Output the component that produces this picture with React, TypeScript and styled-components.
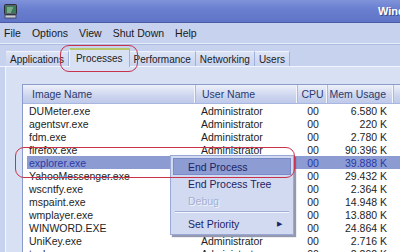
import styled, { createGlobalStyle } from 'styled-components';

const GlobalStyle = createGlobalStyle`
	html, body {
		margin: 0;
		padding: 0;
		background: #c6d2ee;
	}
	body {
		font-family: "Liberation Sans", Arial, sans-serif;
		font-size: 10px;
		color: #1e1e1e;
	}
`;

const Window = styled.div`
	position: relative;
	width: 400px;
	height: 252px;
	overflow: hidden;
	display: flex;
	flex-direction: column;
	background: #c6d2ee;
`;

const TitleBar = styled.div`
	height: 23px;
	flex: none;
	display: flex;
	align-items: center;
	padding-left: 4px;
	box-sizing: border-box;
	background: linear-gradient(#8093da, #6a7fd0 40%, #5f74c6);
	border-bottom: 1px solid #4a5ca8;
	svg {
		flex: none;
	}
`;

const TitleText = styled.div`
	flex: none;
	margin-left: 361px;
	white-space: nowrap;
	color: #ffffff;
	font-weight: bold;
	font-size: 11px;
	text-shadow: 1px 1px 0 #3c4c90;
`;

const MenuBar = styled.div`
	height: 20px;
	flex: none;
	display: flex;
	align-items: center;
	gap: 11px;
	padding-left: 4px;
	border-bottom: 1px solid #e6ecf8;
	box-shadow: 0 1px 0 #aebbe0;
	font-size: 10.5px;
`;

const MenuItem = styled.span`
	color: #1a1a1a;
`;

const TabStrip = styled.div`
	height: 21px;
	flex: none;
	display: flex;
	align-items: flex-end;
	padding-left: 6px;
	margin-top: 1px;
	border-bottom: 1px solid #f2f5fc;
`;

const Tab = styled.div<{ $active?: boolean }>`
	height: ${(p) => (p.$active ? 19 : 15)}px;
	display: flex;
	align-items: center;
	padding: 0 ${(p) => (p.$active ? 6 : 4)}px;
	box-sizing: border-box;
	background: ${(p) => (p.$active ? '#d8e0f4' : 'linear-gradient(#dde4f6, #c9d3ef)')};
	border-top: ${(p) => (p.$active ? '2px solid #b8c868' : '1px solid #eef2fb')};
	border-right: 1px solid #9fb0dc;
	border-left: ${(p) => (p.$active ? '1px solid #f2f5fc' : 'none')};
	margin-bottom: ${(p) => (p.$active ? -1 : 0)}px;
	color: #222;
	font-size: 10px;
	white-space: nowrap;
`;

const Panel = styled.div`
	flex: 1;
	margin-left: 5px;
	padding: 17px 0 0 16px;
	background: #d8e0f4;
	border-left: 1px solid #f2f5fc;
	display: flex;
	flex-direction: column;
`;

const ListView = styled.div`
	flex: 1;
	background: #ffffff;
	border-left: 1px solid #8a9bcc;
	border-top: 1px solid #8a9bcc;
`;

const Columns = '173px 102px 30px 66px';

const HeaderRow = styled.div`
	display: grid;
	grid-template-columns: ${Columns};
	height: 18px;
	background: linear-gradient(#eef1fa, #ccd5ee 60%, #bfcaea);
	border-bottom: 1px solid #a8b6e0;
`;

const HeaderCell = styled.div<{ $align?: string; $pad?: number }>`
	display: flex;
	align-items: center;
	justify-content: ${(p) => p.$align || 'flex-start'};
	padding: 0 ${(p) => p.$pad ?? 0}px;
	border-right: 1px solid #aab8e2;
	box-shadow: inset -1px 0 0 #f4f6fc;
	color: #2a3a70;
	font-size: 10.5px;
	white-space: nowrap;
`;

const Row = styled.div<{ $selected?: boolean }>`
	display: grid;
	grid-template-columns: ${Columns};
	height: 13px;
	align-items: center;
	background: ${(p) => (p.$selected ? 'linear-gradient(90deg, transparent 4px, #8d9bd3 4px)' : 'transparent')};
	color: ${(p) => (p.$selected ? '#2a3ca8' : '#1e1e1e')};
	font-size: 10.5px;
	white-space: nowrap;
`;

const Cell = styled.div<{ $align?: string; $pad?: number }>`
	text-align: ${(p) => p.$align || 'left'};
	padding: 0 ${(p) => p.$pad ?? 0}px;
	overflow: hidden;
`;

const ContextMenu = styled.div`
	position: absolute;
	left: 170px;
	top: 155px;
	width: 118px;
	padding: 2px;
	background: #d2daf1;
	border: 1px solid #9aa8d6;
	box-shadow: 2px 2px 1px rgba(60, 70, 110, 0.55);
	font-size: 10.5px;
`;

const MenuEntry = styled.div<{ $active?: boolean; $disabled?: boolean }>`
	height: 17px;
	display: flex;
	align-items: center;
	justify-content: space-between;
	padding: 0 8px 0 14px;
	box-sizing: border-box;
	background: ${(p) => (p.$active ? '#8d9cd3' : 'transparent')};
	border: 1px solid ${(p) => (p.$active ? '#7b8bc8' : 'transparent')};
	color: ${(p) => (p.$disabled ? '#a4afd2' : '#1c2466')};
	text-shadow: ${(p) => (p.$disabled ? '1px 1px 0 #f0f3fb' : 'none')};
`;

const MenuArrow = styled.span`
	font-size: 7px;
	color: #1c2466;
`;

const MenuSeparator = styled.div`
	height: 0;
	margin: 2px;
	border-top: 1px solid #a2aed6;
	border-bottom: 1px solid #f2f5fc;
`;

const Highlight = styled.div<{ $l: number; $t: number; $w: number; $h: number }>`
	position: absolute;
	left: ${(p) => p.$l}px;
	top: ${(p) => p.$t}px;
	width: ${(p) => p.$w}px;
	height: ${(p) => p.$h}px;
	border: 1.5px solid #c8324a;
	border-radius: 9px;
	box-sizing: border-box;
	pointer-events: none;
`;

const processes = [
	['DUMeter.exe', 'Administrator', '00', '6.580 K'],
	['agentsvr.exe', 'Administrator', '00', '220 K'],
	['fdm.exe', 'Administrator', '00', '2.780 K'],
	['firefox.exe', 'Administrator', '00', '90.396 K'],
	['explorer.exe', 'Administrator', '00', '39.888 K'],
	['YahooMessenger.exe', 'Administrator', '00', '29.432 K'],
	['wscntfy.exe', 'Administrator', '00', '2.364 K'],
	['mspaint.exe', 'Administrator', '00', '14.948 K'],
	['wmplayer.exe', 'Administrator', '00', '13.880 K'],
	['WINWORD.EXE', 'Administrator', '00', '24.864 K'],
	['UniKey.exe', 'Administrator', '00', '2.716 K'],
	['taskmgr.exe', 'Administrator', '00', '2.292 K'],
];

function AppIcon() {
	return (
		<svg width="13" height="15" viewBox="0 0 13 15">
			<rect x="0.5" y="0.5" width="12" height="10" rx="1" fill="#5a6170" stroke="#2a2e38" />
			<rect x="2" y="2" width="9" height="7" fill="#3e7a5a" />
			<path d="M3 4h6M3 6h5M3 8h4" stroke="#c8f0d0" strokeWidth="0.8" />
			<rect x="1" y="11" width="11" height="3" fill="#c8ccd6" stroke="#3a3e48" strokeWidth="0.8" />
		</svg>
	);
}

export default function App() {
	return (
		<Window>
			<GlobalStyle />
			<TitleBar>
				<AppIcon />
				<TitleText>Windows Task Manager</TitleText>
			</TitleBar>
			<MenuBar>
				<MenuItem>File</MenuItem>
				<MenuItem>Options</MenuItem>
				<MenuItem>View</MenuItem>
				<MenuItem>Shut Down</MenuItem>
				<MenuItem>Help</MenuItem>
			</MenuBar>
			<TabStrip>
				<Tab>Applications</Tab>
				<Tab $active>Processes</Tab>
				<Tab>Performance</Tab>
				<Tab>Networking</Tab>
				<Tab>Users</Tab>
			</TabStrip>
			<Panel>
				<ListView>
					<HeaderRow>
						<HeaderCell $pad={9}>Image Name</HeaderCell>
						<HeaderCell $pad={6}>User Name</HeaderCell>
						<HeaderCell $align="center">CPU</HeaderCell>
						<HeaderCell $align="flex-end" $pad={7}>Mem Usage</HeaderCell>
					</HeaderRow>
					{processes.map(([name, user, cpu, mem]) => (
						<Row key={name} $selected={name === 'explorer.exe'}>
							<Cell $pad={6}>{name}</Cell>
							<Cell $pad={5}>{user}</Cell>
							<Cell $align="center">{cpu}</Cell>
							<Cell $align="right" $pad={7}>{mem}</Cell>
						</Row>
					))}
				</ListView>
			</Panel>
			<ContextMenu>
				<MenuEntry $active>End Process</MenuEntry>
				<MenuEntry>End Process Tree</MenuEntry>
				<MenuEntry $disabled>Debug</MenuEntry>
				<MenuSeparator />
				<MenuEntry>
					<span>Set Priority</span>
					<MenuArrow>▶</MenuArrow>
				</MenuEntry>
			</ContextMenu>
			<Highlight $l={60} $t={45} $w={78} $h={27} />
			<Highlight $l={15} $t={147} $w={280} $h={31} />
		</Window>
	);
}
